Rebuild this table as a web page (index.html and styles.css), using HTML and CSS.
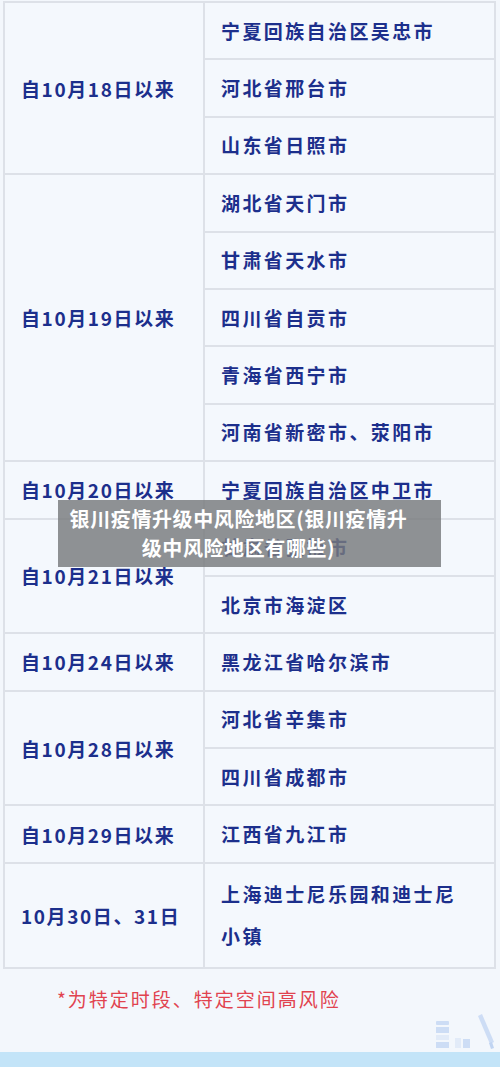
FILE: index.html
```html
<!DOCTYPE html>
<html lang="zh-CN">
<head>
    <meta charset="UTF-8">
    <meta name="viewport" content="width=device-width, initial-scale=1.0">
    <title>银川疫情升级中风险地区</title>
    <link rel="stylesheet" href="styles.css">
</head>
<body>
    <div class="page">
        <!-- Risk area table -->
        <table class="risk-table">
            <tr>
                <td class="date" rowspan="3">自10月18日以来</td>
                <td class="area">宁夏回族自治区吴忠市</td>
            </tr>
            <tr><td class="area">河北省邢台市</td></tr>
            <tr><td class="area">山东省日照市</td></tr>

            <tr>
                <td class="date" rowspan="5">自10月19日以来</td>
                <td class="area">湖北省天门市</td>
            </tr>
            <tr><td class="area">甘肃省天水市</td></tr>
            <tr><td class="area">四川省自贡市</td></tr>
            <tr><td class="area">青海省西宁市</td></tr>
            <tr><td class="area">河南省新密市、荥阳市</td></tr>

            <tr>
                <td class="date">自10月20日以来</td>
                <td class="area">宁夏回族自治区中卫市</td>
            </tr>

            <tr>
                <td class="date" rowspan="2">自10月21日以来</td>
                <td class="area">甘肃省张掖市</td>
            </tr>
            <tr><td class="area">北京市海淀区</td></tr>

            <tr>
                <td class="date">自10月24日以来</td>
                <td class="area">黑龙江省哈尔滨市</td>
            </tr>

            <tr>
                <td class="date" rowspan="2">自10月28日以来</td>
                <td class="area">河北省辛集市</td>
            </tr>
            <tr><td class="area">四川省成都市</td></tr>

            <tr>
                <td class="date">自10月29日以来</td>
                <td class="area">江西省九江市</td>
            </tr>

            <tr class="tall">
                <td class="date">10月30日、31日</td>
                <td class="area">上海迪士尼乐园和迪士尼小镇</td>
            </tr>
        </table>

        <!-- Footnote -->
        <p class="note">*为特定时段、特定空间高风险</p>

        <!-- Faint watermark illustration -->
        <div class="mark">
            <svg width="62" height="40" viewBox="0 0 62 40">
                <g fill="#a9c4ef" opacity="0.5">
                    <rect x="2" y="9" width="13" height="4" rx="1"/>
                    <rect x="2" y="15" width="13" height="6"/>
                    <rect x="2" y="23" width="13" height="5" fill="#d3e0f6"/>
                    <rect x="2" y="30" width="13" height="6"/>
                    <rect x="21" y="26" width="6" height="10" fill="#d3e0f6"/>
                    <rect x="29" y="27" width="7" height="9"/>
                    <path d="M44 4 L48 2 L60 30 L56 32 Z"/>
                    <path d="M55 31 L58 30 L60 36 L57 37 Z" fill="#8fb2ea"/>
                </g>
            </svg>
        </div>
        <div class="band"></div>

        <!-- Caption overlay -->
        <div class="caption">银川疫情升级中风险地区(银川疫情升级中风险地区有哪些)</div>
    </div>
</body>
</html>
```

FILE: styles.css
```css
/* General Styling */
body {
    margin: 0;
    padding: 0;
    background: #f3f7fc;
    font-family: "Noto Sans CJK SC", "Noto Sans", sans-serif;
}

.page {
    position: relative;
    height: 1067px;
    overflow: hidden;
    display: flex;
    flex-direction: column;
}

/* Table */
.risk-table {
    margin: 1px 0 0 3px;
    width: 493px;
    border-collapse: collapse;
    background: #f4f8fd;
    table-layout: fixed;
}

.risk-table td {
    border: 2px solid #dde1e8;
    height: 55.4px;
    padding: 0 16px;
    color: #1c2f8c;
    vertical-align: middle;
    font-weight: 700;
}

.risk-table .date {
    width: 166px;
    font-size: 19px;
    letter-spacing: 1.6px;
}

.risk-table .area {
    font-size: 19px;
    letter-spacing: 2.4px;
    line-height: 42px;
}

.risk-table .tall td {
    height: 103px;
}

.risk-table .tall .area {
    padding-right: 34px;
}

/* Footnote */
.note {
    margin: 17px 0 0 57px;
    color: #e1434f;
    font-size: 19px;
    letter-spacing: 2px;
    line-height: 26px;
}

.mark {
    display: flex;
    justify-content: flex-end;
    padding-right: 4px;
}

.band {
    margin-top: auto;
    height: 15px;
    background: #c3e4f8;
}

/* Caption overlay */
.caption {
    position: absolute;
    left: 58px;
    top: 500px;
    width: 383px;
    height: 67px;
    box-sizing: border-box;
    padding: 4px 30px 0 8px;
    background: rgba(120, 122, 125, 0.82);
    color: #ffffff;
    font-size: 20px;
    font-weight: 700;
    letter-spacing: 0.6px;
    line-height: 29px;
    text-align: center;
}
```
